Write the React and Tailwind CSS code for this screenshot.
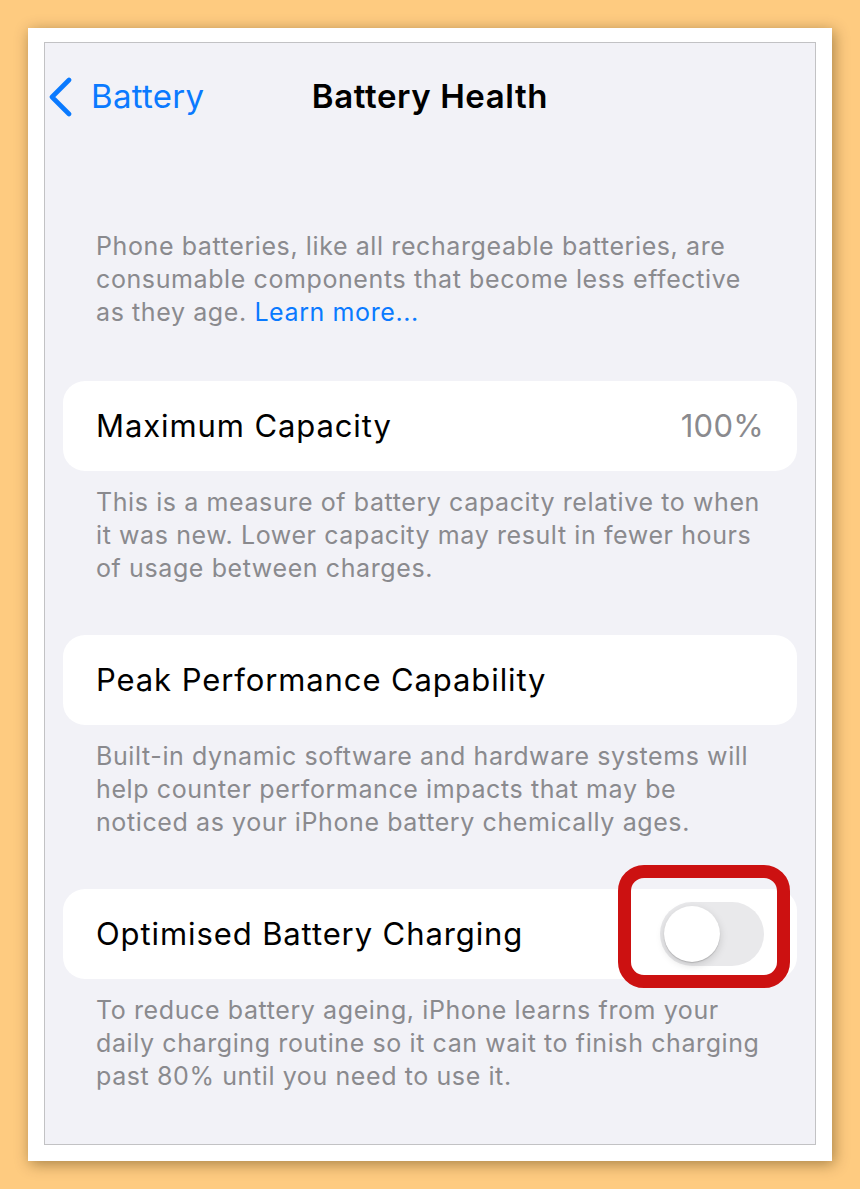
const FONT = { fontFamily: "Inter, 'Noto Sans', sans-serif" }

function Chevron() {
  return (
    <svg width="26" height="40" viewBox="0 0 26 40" fill="none">
      <polyline points="22,3 5,20 22,37" stroke="#0a7aff" strokeWidth="4.6" strokeLinecap="round" strokeLinejoin="round" />
    </svg>
  )
}

function Footer({ lines }) {
  return (
    <div className="px-[33px] text-[25px] leading-[33px] text-[#8a8a8e] tracking-[0.6px]">
      {lines.map((l, i) => <div key={i} className="whitespace-nowrap">{l}</div>)}
    </div>
  )
}

function Toggle() {
  return (
    <div className="w-[104px] h-[64px] rounded-full bg-[#e9e9eb] p-[4px] flex items-center">
      <div className="w-[56px] h-[56px] rounded-full bg-white shadow-[0_3px_8px_rgba(0,0,0,0.15),0_1px_1px_rgba(0,0,0,0.16)]" />
    </div>
  )
}

function App() {
  return (
    <div className="w-[860px] h-[1189px] bg-[#fecb80] pt-[28px] pl-[28px]" style={FONT}>
      <div className="w-[804px] h-[1133px] bg-white pt-[14px] pl-[16px] shadow-[2px_3px_14px_rgba(60,40,0,0.45)]">
        <div className="w-[772px] h-[1103px] border border-[#c2c2c4] bg-[#f2f2f7] overflow-hidden">
          {/* nav */}
          <div className="relative h-[107px] flex items-center">
            <div className="flex items-center text-[#0a7aff] pl-[2px]">
              <Chevron />
              <span className="ml-[18px] text-[33px] tracking-[0.3px]">Battery</span>
            </div>
            <div className="absolute inset-0 flex items-center justify-center text-[33px] font-semibold tracking-[0.6px] text-black">
              Battery Health
            </div>
          </div>

          <div className="px-[18px]">
            <div className="mt-[80px]">
              <Footer lines={[
                "Phone batteries, like all rechargeable batteries, are",
                "consumable components that become less effective",
                <>as they age. <span className="text-[#0a7aff]">Learn more...</span></>,
              ]} />
            </div>

            <div className="mt-[52px] h-[90px] rounded-[22px] bg-white px-[33px] flex items-center justify-between text-[31px] tracking-[0.9px]">
              <span className="text-black">Maximum Capacity</span>
              <span className="text-[#8a8a8e] tracking-[0.3px]">100%</span>
            </div>
            <div className="mt-[15px]">
              <Footer lines={[
                "This is a measure of battery capacity relative to when",
                "it was new. Lower capacity may result in fewer hours",
                "of usage between charges.",
              ]} />
            </div>

            <div className="mt-[50px] h-[90px] rounded-[22px] bg-white px-[33px] flex items-center text-[31px] tracking-[0.9px] text-black">
              Peak Performance Capability
            </div>
            <div className="mt-[15px]">
              <Footer lines={[
                "Built-in dynamic software and hardware systems will",
                "help counter performance impacts that may be",
                "noticed as your iPhone battery chemically ages.",
              ]} />
            </div>

            <div className="relative mt-[50px] h-[90px] rounded-[22px] bg-white pl-[33px] pr-[33px] flex items-center justify-between text-[31px] tracking-[0.9px] text-black">
              <span>Optimised Battery Charging</span>
              <Toggle />
              <div className="absolute left-[555px] top-[-24px] w-[172px] h-[123px] rounded-[26px] border-[13px] border-[#cc1111]" />
            </div>
            <div className="mt-[15px]">
              <Footer lines={[
                "To reduce battery ageing, iPhone learns from your",
                "daily charging routine so it can wait to finish charging",
                "past 80% until you need to use it.",
              ]} />
            </div>
          </div>
        </div>
      </div>
    </div>
  )
}

export default App
